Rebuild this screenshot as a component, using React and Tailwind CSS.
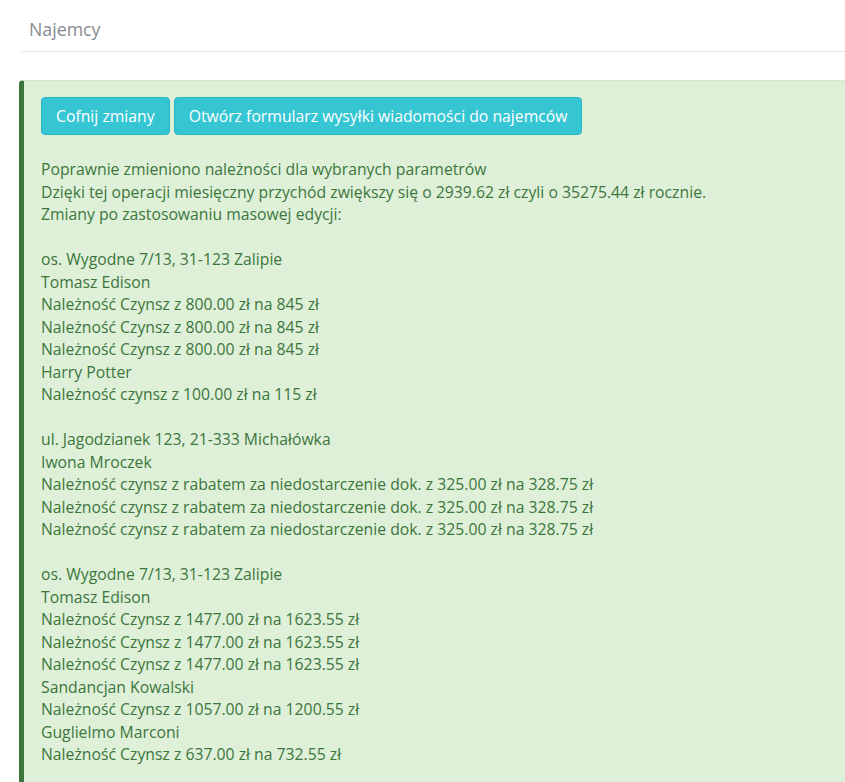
const groups = [
  {
    address: "os. Wygodne 7/13, 31-123 Zalipie",
    lines: [
      "Tomasz Edison",
      "Należność Czynsz z 800.00 zł na 845 zł",
      "Należność Czynsz z 800.00 zł na 845 zł",
      "Należność Czynsz z 800.00 zł na 845 zł",
      "Harry Potter",
      "Należność czynsz z 100.00 zł na 115 zł",
    ],
  },
  {
    address: "ul. Jagodzianek 123, 21-333 Michałówka",
    lines: [
      "Iwona Mroczek",
      "Należność czynsz z rabatem za niedostarczenie dok. z 325.00 zł na 328.75 zł",
      "Należność czynsz z rabatem za niedostarczenie dok. z 325.00 zł na 328.75 zł",
      "Należność czynsz z rabatem za niedostarczenie dok. z 325.00 zł na 328.75 zł",
    ],
  },
  {
    address: "os. Wygodne 7/13, 31-123 Zalipie",
    lines: [
      "Tomasz Edison",
      "Należność Czynsz z 1477.00 zł na 1623.55 zł",
      "Należność Czynsz z 1477.00 zł na 1623.55 zł",
      "Należność Czynsz z 1477.00 zł na 1623.55 zł",
      "Sandancjan Kowalski",
      "Należność Czynsz z 1057.00 zł na 1200.55 zł",
      "Guglielmo Marconi",
      "Należność Czynsz z 637.00 zł na 732.55 zł",
    ],
  },
]

export default function App() {
  return (
    <div className="min-h-screen bg-white font-['Open_Sans',sans-serif] text-[15.75px] leading-[22.5px]">
      <div className="ml-5 -mr-2 rounded-b-[3px] bg-white px-[9px] pt-[18px] pb-[11px] border-b border-[#e8e8e8]">
        <h2 className="text-[17.75px] leading-[22px] text-[#878a8e]">Najemcy</h2>
      </div>

      <div className="ml-[19px] -mr-4 mt-7 rounded-tl-[4px] border-t border-[#d6e9c6] border-l-[5px] border-l-[#3c763d] bg-[#dff0d8] pl-[17px] pt-4 pb-6 text-[#3c763d]">
        <div className="flex gap-1">
          <button className="rounded-[4px] border border-[#2bb8c6] bg-[#36c5d3] px-[14px] py-[7px] text-white leading-[22px]">
            Cofnij zmiany
          </button>
          <button className="rounded-[4px] border border-[#2bb8c6] bg-[#36c5d3] px-[14px] py-[7px] text-white leading-[22px]">
            Otwórz formularz wysyłki wiadomości do najemców
          </button>
        </div>

        <div className="mt-[23px]">
          <p>Poprawnie zmieniono należności dla wybranych parametrów</p>
          <p>Dzięki tej operacji miesięczny przychód zwiększy się o 2939.62 zł czyli o 35275.44 zł rocznie.</p>
          <p>Zmiany po zastosowaniu masowej edycji:</p>
          {groups.map((g, i) => (
            <div key={i} className="mt-[22.5px]">
              <p>{g.address}</p>
              {g.lines.map((l, j) => (
                <p key={j}>{l}</p>
              ))}
            </div>
          ))}
        </div>
      </div>
    </div>
  )
}
